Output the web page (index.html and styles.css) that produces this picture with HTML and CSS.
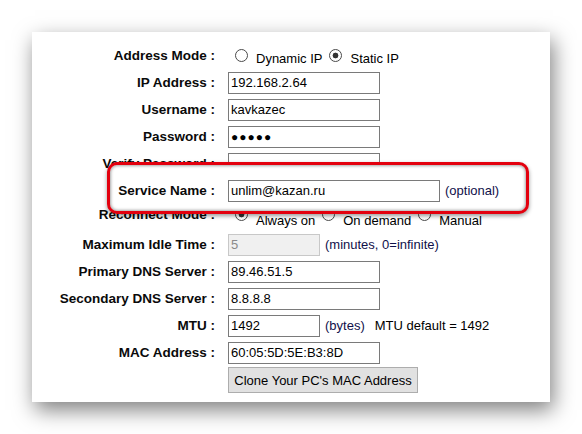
FILE: index.html
```html
<!DOCTYPE html>
<html>
<head>
<meta charset="utf-8">
<link rel="stylesheet" href="styles.css">
</head>
<body>
<div class="page">
  <div class="card">
    <div class="form">
      <div class="label">Address Mode :</div>
      <div class="value">
        <span class="opt"><span class="radio"></span><span class="opt-text">Dynamic IP</span></span>
        <span class="opt"><span class="radio on"></span><span class="opt-text">Static IP</span></span>
      </div>

      <div class="label">IP Address :</div>
      <div class="value"><div class="field wide">192.168.2.64</div></div>

      <div class="label">Username :</div>
      <div class="value"><div class="field wide">kavkazec</div></div>

      <div class="label">Password :</div>
      <div class="value"><div class="field wide dots">&#9679;&#9679;&#9679;&#9679;&#9679;</div></div>

      <div class="label">Verify Password :</div>
      <div class="value"><div class="field wide dots">&#9679;&#9679;&#9679;&#9679;&#9679;</div></div>

      <div class="label lifted">Service Name :</div>
      <div class="value lifted"><div class="field service">unlim@kazan.ru</div><span class="note">(optional)</span></div>
      <div class="highlight"></div>

      <div class="label up">Reconnect Mode :</div>
      <div class="value tight">
        <span class="opt"><span class="radio on"></span><span class="opt-text">Always on</span></span>
        <span class="opt"><span class="radio"></span><span class="opt-text">On demand</span></span>
        <span class="opt"><span class="radio"></span><span class="opt-text">Manual</span></span>
      </div>

      <div class="label">Maximum Idle Time :</div>
      <div class="value"><div class="field small disabled">5</div><span class="note">(minutes, 0=infinite)</span></div>

      <div class="label">Primary DNS Server :</div>
      <div class="value"><div class="field wide">89.46.51.5</div></div>

      <div class="label">Secondary DNS Server :</div>
      <div class="value"><div class="field wide">8.8.8.8</div></div>

      <div class="label">MTU :</div>
      <div class="value"><div class="field small">1492</div><span class="note">(bytes)</span><span class="note mtu-default">MTU default = 1492</span></div>

      <div class="label">MAC Address :</div>
      <div class="value"><div class="field wide">60:05:5D:5E:B3:8D</div></div>

      <div class="label"></div>
      <div class="value"><button class="btn" type="button">Clone Your PC's MAC Address</button></div>
    </div>
  </div>
</div>
</body>
</html>
```

FILE: styles.css
```css
html, body {
  margin: 0;
  padding: 0;
  background: #ffffff;
}

.page {
  width: 582px;
  height: 434px;
  padding: 32px 0 0 32px;
  box-sizing: border-box;
  overflow: hidden;
}

.card {
  width: 518px;
  height: 370px;
  background: #ffffff;
  box-shadow: 3px 8px 20px rgba(0, 0, 0, 0.5);
  box-sizing: border-box;
  padding-top: 10px;
  font-family: "Liberation Sans", Arial, sans-serif;
  font-size: 13px;
  color: #000;
}

.form {
  position: relative;
  display: grid;
  grid-template-columns: 183px 1fr;
  grid-auto-rows: 27px;
  column-gap: 13px;
  align-items: center;
}

.label {
  text-align: right;
  font-weight: bold;
  font-size: 13.5px;
  white-space: nowrap;
  color: #0a0a0a;
}

.label.up {
  margin-bottom: 6px;
}

.value {
  display: flex;
  align-items: center;
  white-space: nowrap;
}

.lifted {
  position: relative;
  z-index: 1;
}

.field {
  box-sizing: border-box;
  height: 22px;
  line-height: 20px;
  border: 1px solid #7a7a7a;
  padding: 0 2px;
  background: #fff;
  color: #000;
}

.field.wide { width: 152px; }
.field.service { width: 212px; }
.field.small { width: 92px; }

.field.disabled {
  background: #f0f0f0;
  border-color: #c8c8c8;
  color: #8a8a8a;
}

.field.dots {
  font-size: 12px;
  letter-spacing: 1px;
}

.note {
  margin-left: 5px;
  color: #10104a;
}

.note.mtu-default {
  margin-left: 10px;
  color: #000;
}

.opt {
  display: inline-flex;
  align-items: flex-start;
}

.opt-text {
  padding-top: 6px;
  margin-left: 8px;
}

.radio {
  width: 11px;
  height: 11px;
  border: 1px solid #4a4a4a;
  border-radius: 50%;
  background: #fff;
  margin-left: 7px;
  margin-top: 4px;
  box-sizing: content-box;
}

.tight .radio {
  margin-top: 1px;
}

.radio.on {
  background: radial-gradient(circle, #333 0, #333 2.6px, #fff 3.2px);
}

.highlight {
  position: absolute;
  grid-row: 6 / 7;
  grid-column: 1 / 3;
  left: 75px;
  right: 21px;
  top: -15px;
  bottom: -10px;
  background: #fff;
  border: 3px solid #e3000e;
  border-radius: 10px;
  box-shadow: inset 0 0 3px 1px rgba(0, 0, 0, 0.35), 0 2px 4px rgba(0, 0, 0, 0.4);
}

.btn {
  height: 26px;
  width: 190px;
  margin-top: 1px;
  font-family: "Liberation Sans", Arial, sans-serif;
  font-size: 13px;
  color: #000;
  background: #e1e1e1;
  border: 1px solid #adadad;
  border-radius: 0;
  padding: 0;
}
```
